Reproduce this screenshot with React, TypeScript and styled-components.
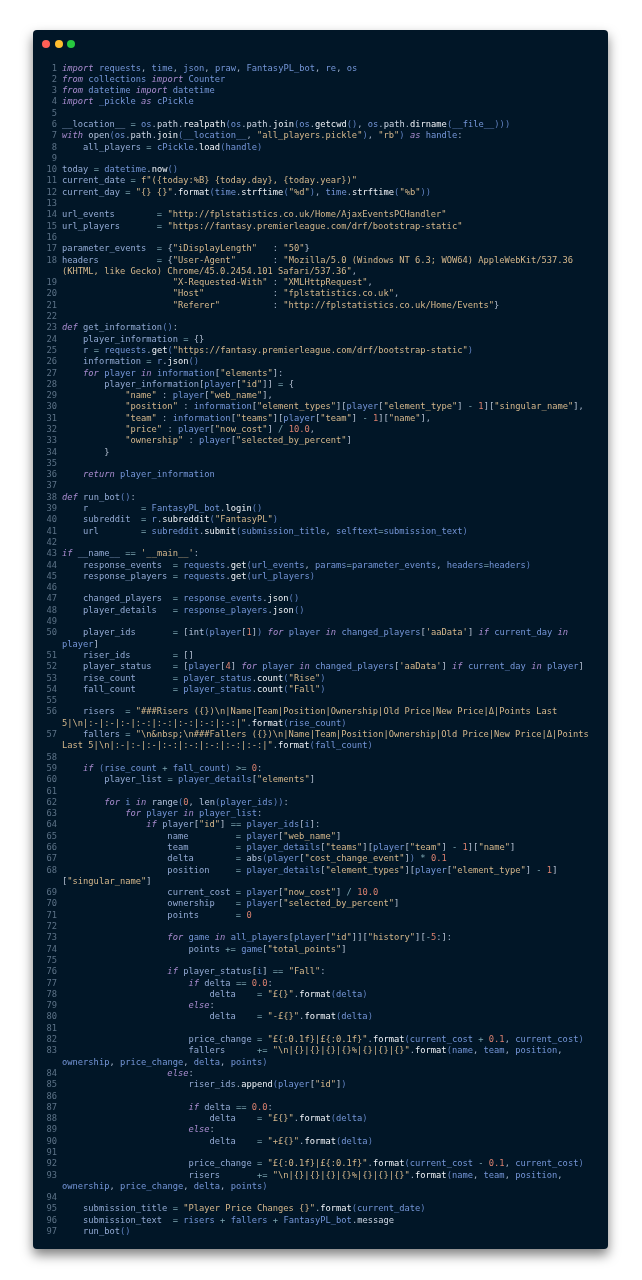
import React from "react";
import styled, { createGlobalStyle } from "styled-components";

const GlobalStyle = createGlobalStyle`
  html, body {
    margin: 0;
    padding: 0;
    background: #ffffff;
  }
`;

const Page = styled.div`
  width: 642px;
  height: 1280px;
  padding: 30px 34px 31px 33px;
  box-sizing: border-box;
  overflow: hidden;
`;

const Window = styled.div`
  height: 1219px;
  background: #011627;
  border-radius: 4px;
  box-shadow: 0 6px 12px rgba(0, 0, 0, 0.5);
  overflow: hidden;
`;

const TitleBar = styled.div`
  display: flex;
  gap: 4.6px;
  padding: 10px 0 0 9px;
  height: 22.5px;
`;

const Dot = styled.span<{ $color: string }>`
  width: 8px;
  height: 8px;
  border-radius: 50%;
  background: ${(p) => p.$color};
`;

const CodeBlock = styled.div`
  display: grid;
  grid-template-columns: 24px 1fr;
  column-gap: 5px;
  font-family: "DejaVu Sans Mono", monospace;
  font-size: 8.75px;
  line-height: 11.29px;
  filter: blur(0.35px);
`;

const LineNumber = styled.div`
  text-align: right;
  color: #5c7287;
`;

const LineText = styled.div`
  min-height: 11.29px;
`;

const Row = styled.div`
  white-space: pre;
`;

type Kind = "kw" | "str" | "num" | "op" | "id" | "target" | "prop" | "call" | "builtin" | "paren" | "punct" | "bracket";

const tokenColors: Record<Kind, string> = {
  kw: "#a98ccf",
  str: "#d6b88c",
  num: "#dc8270",
  op: "#7fa8b4",
  id: "#7596d8",
  target: "#93aad4",
  prop: "#cdd6e4",
  call: "#f0f3f8",
  builtin: "#b4c4de",
  paren: "#5f80bf",
  punct: "#a3b1c6",
  bracket: "#b5c0d2",
};

const Token = styled.span<{ $kind: Kind }>`
  color: ${(p) => tokenColors[p.$kind]};
  font-style: ${(p) => (p.$kind === "kw" ? "italic" : "normal")};
`;

const source = String.raw`import requests, time, json, praw, FantasyPL_bot, re, os
from collections import Counter
from datetime import datetime
import _pickle as cPickle

__location__ = os.path.realpath(os.path.join(os.getcwd(), os.path.dirname(__file__)))
with open(os.path.join(__location__, "all_players.pickle"), "rb") as handle:
    all_players = cPickle.load(handle)

today = datetime.now()
current_date = f"({today:%B} {today.day}, {today.year})"
current_day = "{} {}".format(time.strftime("%d"), time.strftime("%b"))

url_events        = "http://fplstatistics.co.uk/Home/AjaxEventsPCHandler"
url_players       = "https://fantasy.premierleague.com/drf/bootstrap-static"

parameter_events  = {"iDisplayLength"   : "50"}
headers           = {"User-Agent"       : "Mozilla/5.0 (Windows NT 6.3; WOW64) AppleWebKit/537.36~(KHTML, like Gecko) Chrome/45.0.2454.101 Safari/537.36",
                     "X-Requested-With" : "XMLHttpRequest",
                     "Host"             : "fplstatistics.co.uk",
                     "Referer"          : "http://fplstatistics.co.uk/Home/Events"}

def get_information():
    player_information = {}
    r = requests.get("https://fantasy.premierleague.com/drf/bootstrap-static")
    information = r.json()
    for player in information["elements"]:
        player_information[player["id"]] = {
            "name" : player["web_name"],
            "position" : information["element_types"][player["element_type"] - 1]["singular_name"],
            "team" : information["teams"][player["team"] - 1]["name"],
            "price" : player["now_cost"] / 10.0,
            "ownership" : player["selected_by_percent"]
        }

    return player_information

def run_bot():
    r          = FantasyPL_bot.login()
    subreddit  = r.subreddit("FantasyPL")
    url        = subreddit.submit(submission_title, selftext=submission_text)

if __name__ == '__main__':
    response_events  = requests.get(url_events, params=parameter_events, headers=headers)
    response_players = requests.get(url_players)

    changed_players  = response_events.json()
    player_details   = response_players.json()

    player_ids       = [int(player[1]) for player in changed_players['aaData'] if current_day in~player]
    riser_ids        = []
    player_status    = [player[4] for player in changed_players['aaData'] if current_day in player]
    rise_count       = player_status.count("Rise")
    fall_count       = player_status.count("Fall")

    risers  = "###Risers ({})\n|Name|Team|Position|Ownership|Old Price|New Price|Δ|Points Last~5|\n|:-|:-|:-|:-:|:-:|:-:|:-:|:-:|".format(rise_count)
    fallers = "\n&nbsp;\n###Fallers ({})\n|Name|Team|Position|Ownership|Old Price|New Price|Δ|Points~Last 5|\n|:-|:-|:-|:-:|:-:|:-:|:-:|:-:|".format(fall_count)

    if (rise_count + fall_count) >= 0:
        player_list = player_details["elements"]

        for i in range(0, len(player_ids)):
            for player in player_list:
                if player["id"] == player_ids[i]:
                    name         = player["web_name"]
                    team         = player_details["teams"][player["team"] - 1]["name"]
                    delta        = abs(player["cost_change_event"]) * 0.1
                    position     = player_details["element_types"][player["element_type"] - 1]~["singular_name"]
                    current_cost = player["now_cost"] / 10.0
                    ownership    = player["selected_by_percent"]
                    points       = 0

                    for game in all_players[player["id"]]["history"][-5:]:
                        points += game["total_points"]

                    if player_status[i] == "Fall":
                        if delta == 0.0:
                            delta    = "£{}".format(delta)
                        else:
                            delta    = "-£{}".format(delta)

                        price_change = "£{:0.1f}|£{:0.1f}".format(current_cost + 0.1, current_cost)
                        fallers      += "\n|{}|{}|{}|{}%|{}|{}|{}".format(name, team, position,~ownership, price_change, delta, points)
                    else:
                        riser_ids.append(player["id"])

                        if delta == 0.0:
                            delta    = "£{}".format(delta)
                        else:
                            delta    = "+£{}".format(delta)

                        price_change = "£{:0.1f}|£{:0.1f}".format(current_cost - 0.1, current_cost)
                        risers       += "\n|{}|{}|{}|{}%|{}|{}|{}".format(name, team, position,~ownership, price_change, delta, points)

    submission_title = "Player Price Changes {}".format(current_date)
    submission_text  = risers + fallers + FantasyPL_bot.message
    run_bot()`;

const keywords = new Set(["import", "from", "as", "with", "def", "for", "in", "if", "else", "return"]);
const builtins = new Set(["open", "int", "abs", "range", "len"]);

type Piece = { kind: Kind; text: string };

const classify = (part: string, prev: string | undefined, next: string | undefined, first: boolean): Kind => {
  if (/^\s+$/.test(part)) return "id";
  if (/^f?["']/.test(part)) return "str";
  if (/^\d/.test(part)) return "num";
  if (/^[A-Za-z_]/.test(part)) {
    if (keywords.has(part)) return "kw";
    if (prev === "." && next === "(") return "call";
    if (prev === ".") return "prop";
    if (builtins.has(part)) return "builtin";
    if (first) return "target";
    return "id";
  }
  if (/^[=+\-*/<>]+$/.test(part)) return "op";
  if (part === "(" || part === ")") return "paren";
  if (/^[[\]{}]$/.test(part)) return "bracket";
  return "punct";
};

// ~ marks the place where the long lines wrap in the picture
const tokenize = (line: string): Piece[][] => {
  const pattern = /~|\s+|f?"[^"]*"|'[^']*'|\d+(?:\.\d+)?|[A-Za-z_][A-Za-z0-9_]*|[=+\-*/<>]+|[()]|[[\]{}]|./g;
  const parts = line.match(pattern) ?? [];
  const rows: Piece[][] = [[]];
  let first = true;
  parts.forEach((part, i) => {
    if (part === "~") {
      rows.push([]);
      return;
    }
    const kind = classify(part, parts[i - 1], parts[i + 1], first);
    if (!/^\s+$/.test(part) && part !== "def" && part !== "if") first = false;
    part.split("~").forEach((text, n) => {
      if (n > 0) rows.push([]);
      rows[rows.length - 1].push({ kind, text });
    });
  });
  return rows;
};

const App: React.FC = () => {
  const lines = source.split("\n");
  return (
    <Page>
      <GlobalStyle />
      <Window>
        <TitleBar>
          <Dot $color="#ff5f56" />
          <Dot $color="#ffbd2e" />
          <Dot $color="#27c93f" />
        </TitleBar>
        <CodeBlock>
          {lines.map((line, i) => (
            <React.Fragment key={i}>
              <LineNumber>{i + 1}</LineNumber>
              <LineText>
                {tokenize(line).map((row, r) => (
                  <Row key={r}>
                    {row.map((t, j) => (
                      <Token key={j} $kind={t.kind}>
                        {t.text}
                      </Token>
                    ))}
                  </Row>
                ))}
              </LineText>
            </React.Fragment>
          ))}
        </CodeBlock>
      </Window>
    </Page>
  );
};

export default App;
